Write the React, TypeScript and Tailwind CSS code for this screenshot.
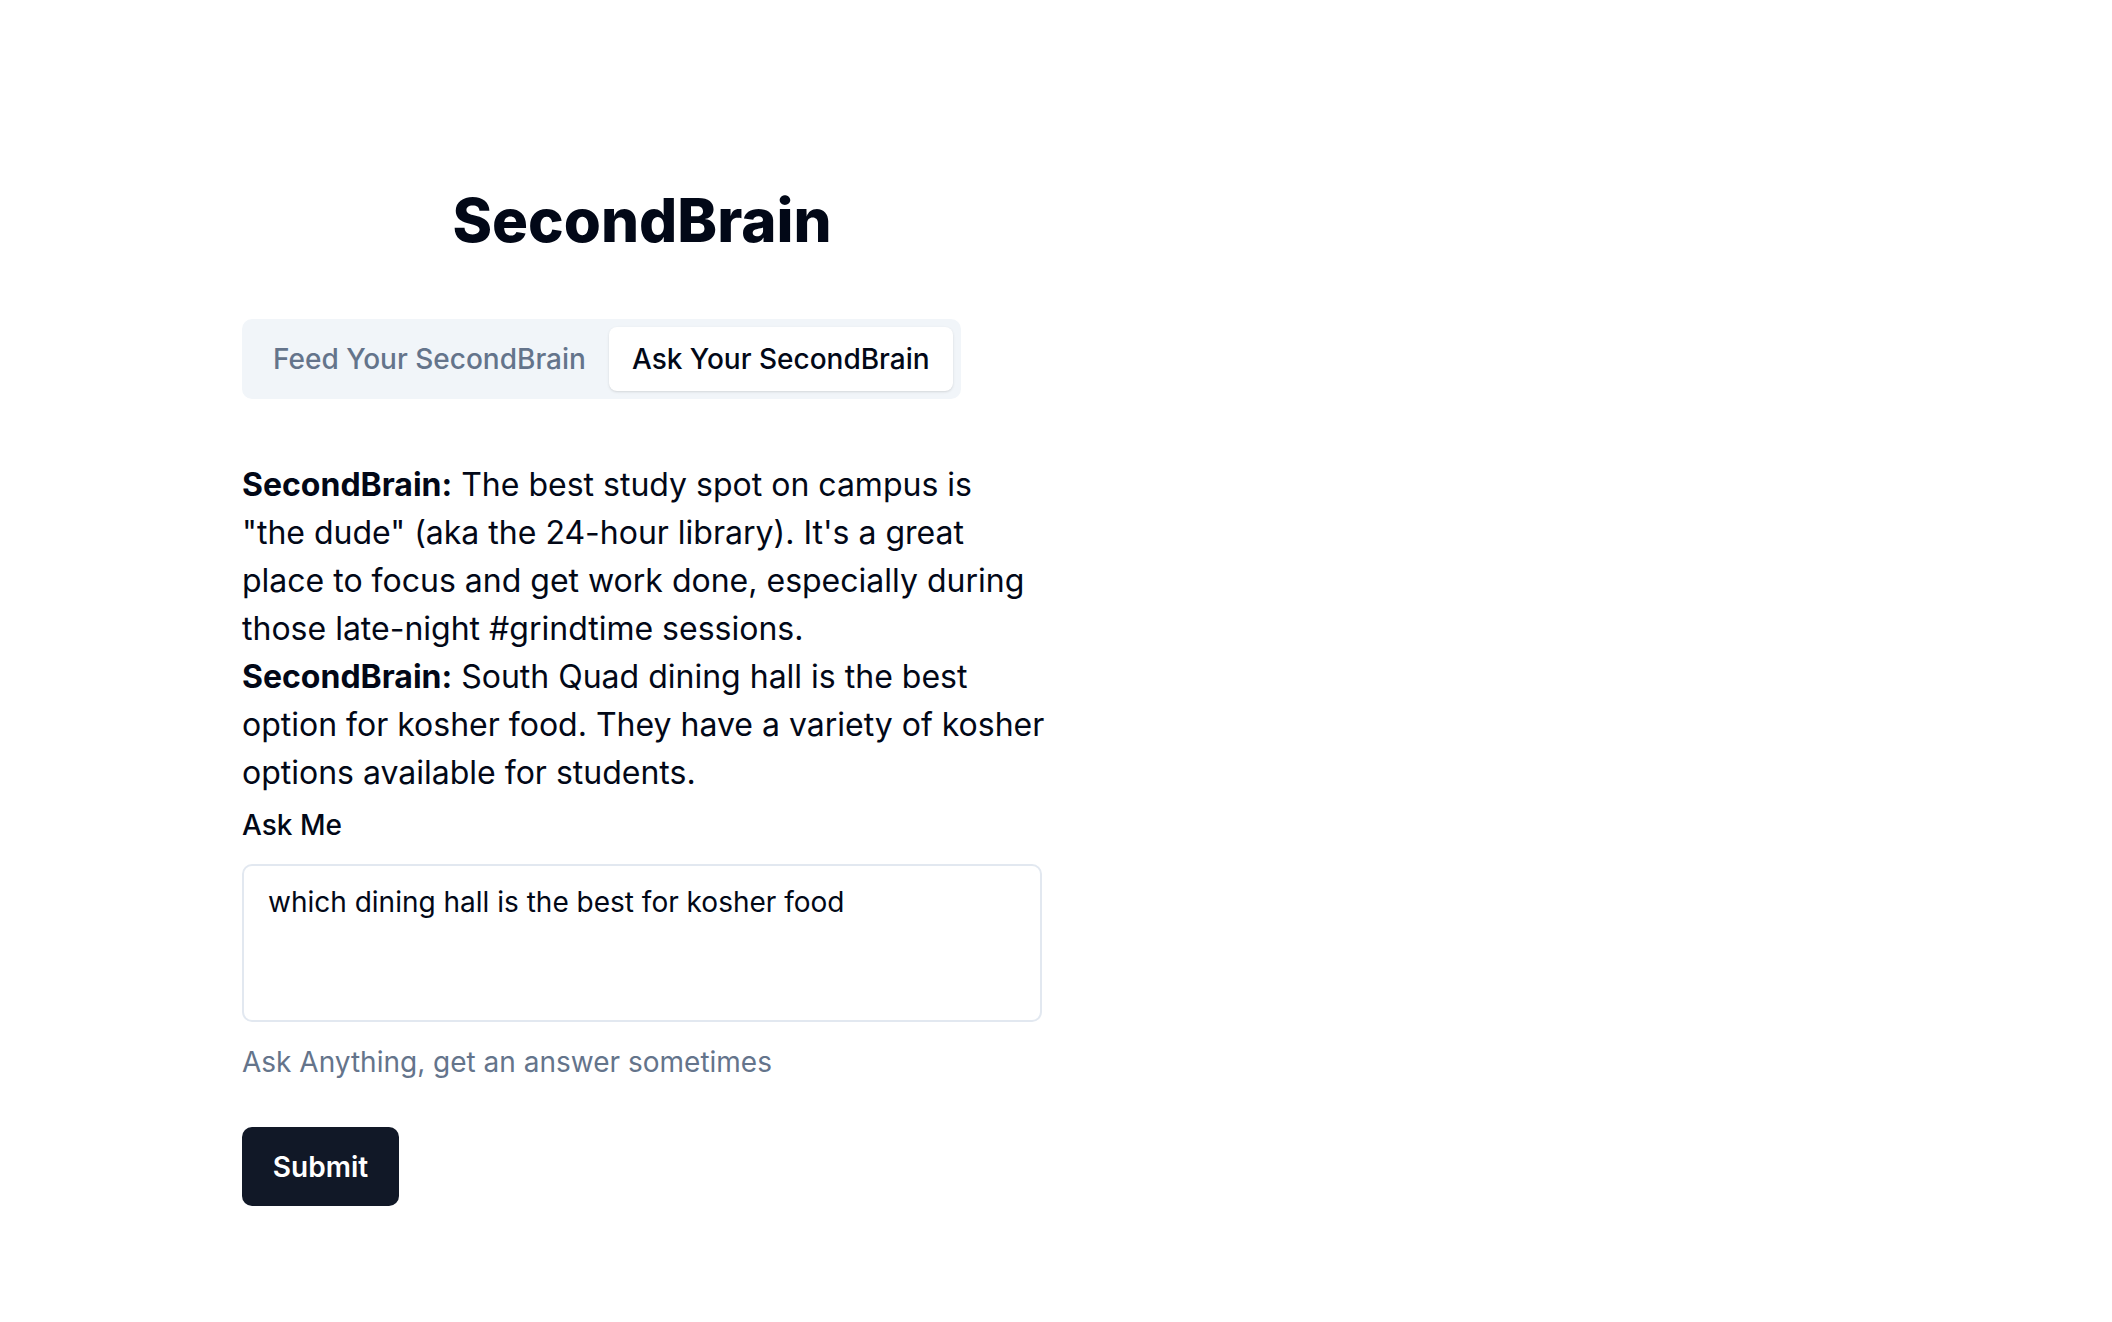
import { useState } from "react";

export default function App() {
  const [tab, setTab] = useState("ask");
  const [question, setQuestion] = useState("which dining hall is the best for kosher food");

  return (
    <div className="min-h-screen bg-white font-[Inter,sans-serif] text-[#020817]">
      <div className="pt-[184px] pl-[242px]">
        <div className="flex w-[800px] flex-col">
          <h1 className="text-center text-[60px] leading-[72px] font-extrabold">SecondBrain</h1>

          <div className="mt-[63px] flex h-[80px] w-fit items-center rounded-[10px] bg-[#f1f5f9] p-[8px] text-[28px] font-medium">
            <button
              onClick={() => setTab("feed")}
              className={`h-full rounded-[8px] px-[23px] ${tab === "feed" ? "bg-white text-[#020817] shadow-sm" : "text-[#64748b]"}`}
            >
              Feed Your SecondBrain
            </button>
            <button
              onClick={() => setTab("ask")}
              className={`h-full rounded-[8px] px-[23px] ${tab === "ask" ? "bg-white text-[#020817] shadow-sm" : "text-[#64748b]"}`}
            >
              Ask Your SecondBrain
            </button>
          </div>

          <div className="mt-[62px] -mr-[10px] text-[32px] leading-[48px]">
            <p>
              <span className="font-bold">SecondBrain:</span> The best study spot on campus is{" "}
              <span className="whitespace-nowrap">"the dude"</span> (aka the 24-hour library). It's a great place to
              focus and get work done, especially during those late-night #grindtime sessions.
            </p>
            <p>
              <span className="font-bold">SecondBrain:</span> South Quad dining hall is the best option for kosher
              food. They have a variety of kosher options available for students.
            </p>
          </div>

          <label className="mt-[8px] text-[28px] leading-[40px] font-medium">Ask Me</label>
          <textarea
            value={question}
            onChange={(e) => setQuestion(e.target.value)}
            className="mt-[19px] h-[158px] w-full resize-none rounded-[10px] border-2 border-[#e2e8f0] px-[24px] pt-[16px] text-[28px] leading-[40px] outline-none"
          />
          <p className="mt-[20px] text-[28px] leading-[40px] text-[#64748b]">Ask Anything, get an answer sometimes</p>

          <button className="mt-[45px] h-[79px] w-[157px] rounded-[10px] bg-[#111827] text-[28px] font-semibold text-white">
            Submit
          </button>
        </div>
      </div>
    </div>
  );
}
